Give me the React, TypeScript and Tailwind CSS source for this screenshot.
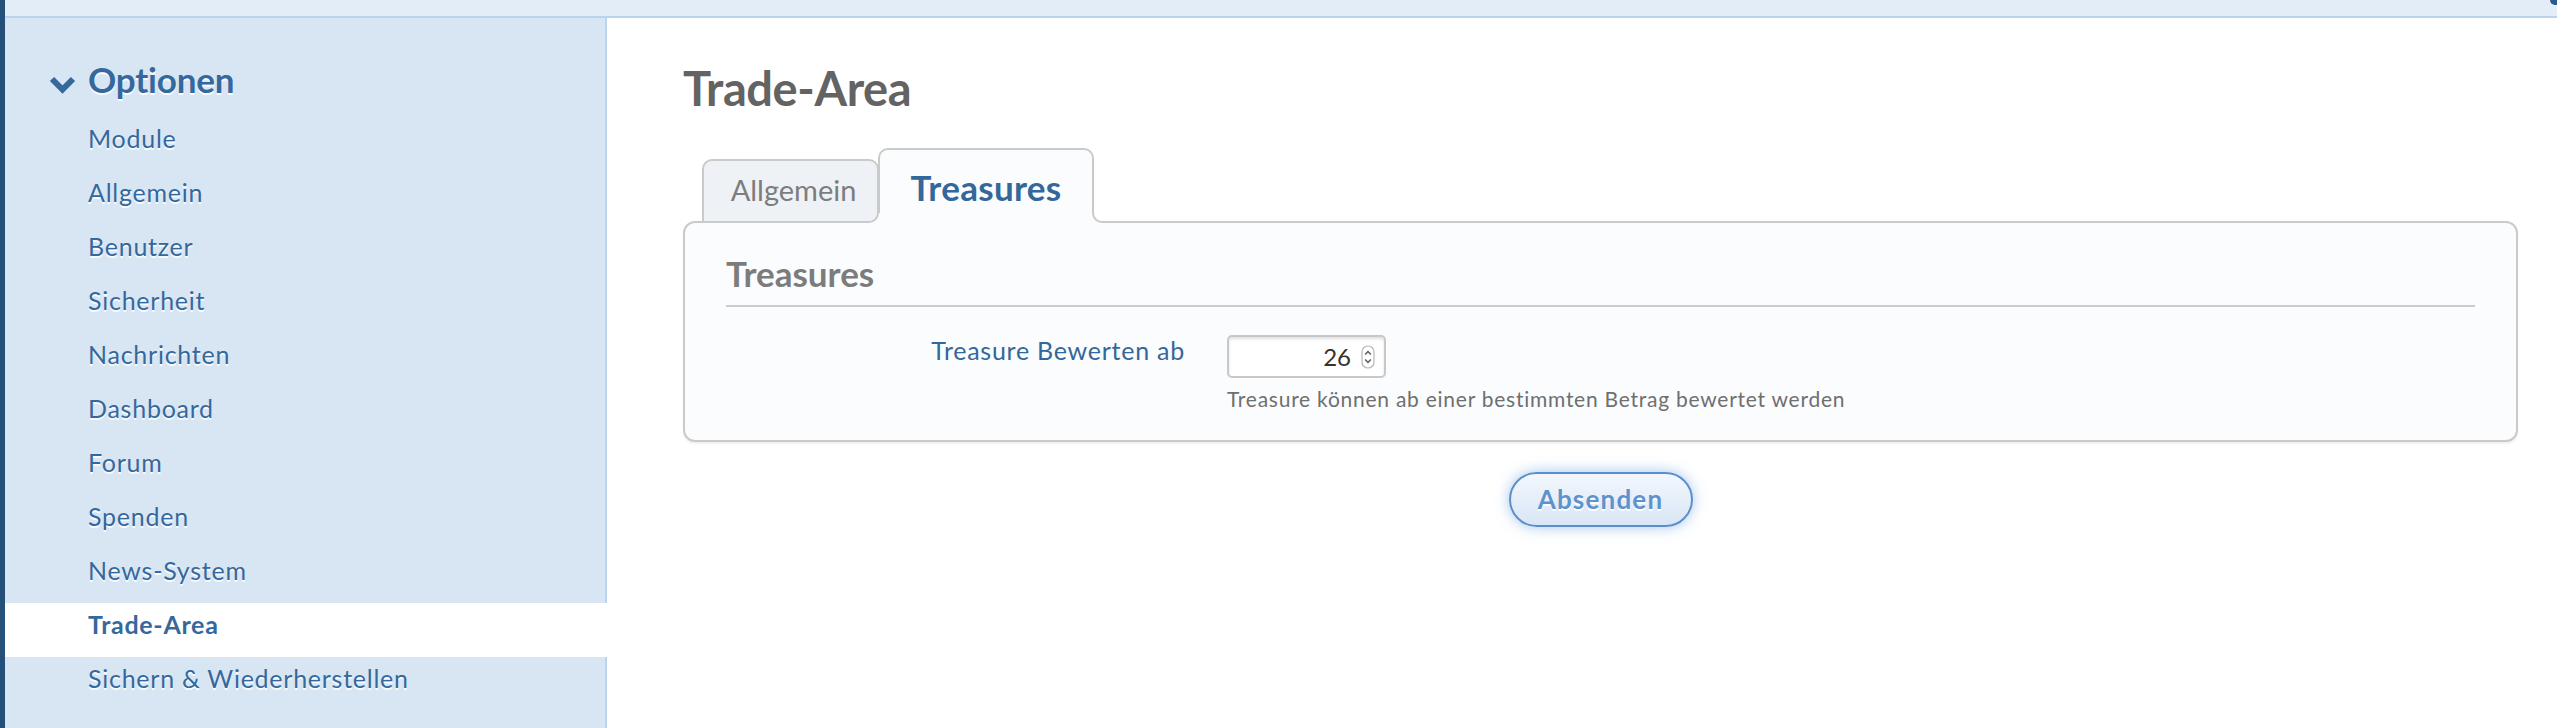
import React from "react";

const items = [
  "Module",
  "Allgemein",
  "Benutzer",
  "Sicherheit",
  "Nachrichten",
  "Dashboard",
  "Forum",
  "Spenden",
  "News-System",
  "Trade-Area",
  "Sichern & Wiederherstellen",
];

export default function App() {
  return (
    <div className="flex h-[728px] w-[2557px] overflow-hidden bg-white font-['Lato',sans-serif]">
      <div className="w-[5px] shrink-0 bg-[#24507a]" />
      <div className="flex min-w-0 flex-1 flex-col">
        <div className="flex h-[18px] shrink-0 justify-end border-b-2 border-[#bad4ef] bg-[#e3edf8]">
          <div className="h-[5px] w-[7px] rounded-bl-[6px] bg-[#2c5a8a]" />
        </div>
        <div className="flex min-h-0 flex-1">
          <aside className="w-[602px] shrink-0 border-r-2 border-[#bad4ef] bg-[#d8e6f4] pt-[38px]">
            <div className="mb-[15px] flex h-[46px] items-start">
              <svg
                className="ml-[44px] mt-[18px] shrink-0"
                width="27"
                height="20"
                viewBox="0 0 27 20"
              >
                <path
                  d="M3 5 L13.5 15.5 L24 5"
                  fill="none"
                  stroke="#35689c"
                  strokeWidth="6"
                  strokeLinejoin="miter"
                />
              </svg>
              <span className="ml-[12px] text-[35px] font-bold leading-[46px] tracking-[-0.2px] text-[#35689c] [text-shadow:0_2px_0_rgba(255,255,255,0.9)]">
                Optionen
              </span>
            </div>
            {items.map((it) => {
              const active = it === "Trade-Area";
              return (
                <div
                  key={it}
                  className={
                    active
                      ? "relative -mr-[2px] h-[54px] bg-white pl-[83px] text-[25px] font-bold leading-[43px] tracking-[0.7px] text-[#35689c]"
                      : "h-[54px] pl-[83px] text-[25px] leading-[43px] tracking-[0.75px] text-[#35689c] [text-shadow:0_2px_0_rgba(255,255,255,0.85)]"
                  }
                >
                  {it}
                </div>
              );
            })}
          </aside>

          <main className="min-w-0 flex-1 pl-[76px] pr-[39px] pt-[42px]">
            <h1 className="text-[47px] font-bold leading-[56px] tracking-[-0.4px] text-[#636363]">
              Trade-Area
            </h1>

            <div className="relative z-10 ml-[19px] mt-[32px] flex h-[75px] items-end">
              <div className="relative z-20 h-[64px] w-[177px] rounded-t-[10px] rounded-br-[10px] border-2 border-[#cacaca] bg-[#eef2f7] pl-[6px] pt-[11px] text-center text-[29px] leading-[35px] text-[#7d7d7d]">
                Allgemein
              </div>
              <div className="relative z-10 -ml-[1px] flex h-[75px] w-[216px] flex-col">
                <div className="h-[65px] rounded-t-[10px] border-2 border-b-0 border-[#cacaca] bg-[#fafcfe] pt-[16px] text-center text-[35px] font-bold leading-[42px] tracking-[0.3px] text-[#34679a]">
                  Treasures
                </div>
                <div className="-ml-[10px] h-[10px] bg-[#fafcfe]" />
              </div>
              <div className="relative z-10 -ml-[2px] h-[10px] w-[12px] bg-[#fafcfe]">
                <div className="h-full w-full rounded-bl-[10px] border-b-2 border-l-2 border-[#cacaca] bg-white" />
              </div>
            </div>

            <div className="-mt-[2px] rounded-[12px] border-2 border-[#cacaca] bg-[#fafcfe] px-[41px] pb-[29px] pt-[29px] shadow-[0_2px_2px_rgba(0,0,0,0.06)]">
              <h2 className="text-[35px] font-bold leading-[42px] text-[#7c7c7c]">
                Treasures
              </h2>
              <div className="mt-[11px] h-[2px] bg-[#cccccc]" />
              <div className="mt-[28px] flex items-start">
                <div className="w-[459px] shrink-0 text-right text-[25px] leading-[30px] tracking-[0.75px] text-[#34679a]">
                  Treasure Bewerten ab
                </div>
                <div className="ml-[42px]">
                  <div className="flex h-[43px] w-[159px] items-center justify-end rounded-[5px] border-2 border-[#c8c8c8] bg-white pr-[9px] shadow-[inset_0_2px_3px_rgba(0,0,0,0.12)]">
                    <span className="text-[24px] leading-[28px] text-[#333]">26</span>
                    <svg className="ml-[10px]" width="14" height="24" viewBox="0 0 14 24">
                      <rect x="1" y="1" width="12" height="22" rx="6" fill="#fff" stroke="#b5b5b5" strokeWidth="1.2" />
                      <path d="M4.2 9.5 L7 6.5 L9.8 9.5" fill="none" stroke="#555" strokeWidth="1.3" />
                      <path d="M4.2 14.5 L7 17.5 L9.8 14.5" fill="none" stroke="#555" strokeWidth="1.3" />
                    </svg>
                  </div>
                  <div className="mt-[8px] text-[21px] leading-[25px] tracking-[0.75px] text-[#6f6f6f]">
                    Treasure können ab einer bestimmten Betrag bewertet werden
                  </div>
                </div>
              </div>
            </div>

            <div className="mt-[30px] flex justify-center">
              <button className="h-[55px] w-[184px] rounded-full border-2 border-[#5b8fcb] bg-linear-to-b from-[#f3f7fd] to-[#d9e6f5] text-[26px] font-bold tracking-[1.2px] text-[#5e92cd] shadow-[0_0_14px_rgba(90,150,220,0.55)] [text-shadow:0_2px_0_#fff]">
                Absenden
              </button>
            </div>
          </main>
        </div>
      </div>
    </div>
  );
}
